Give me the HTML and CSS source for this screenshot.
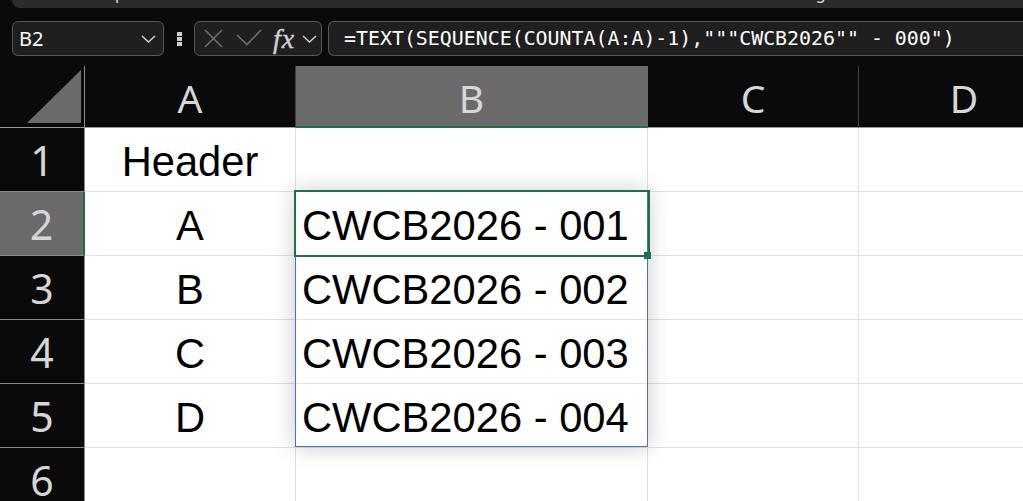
FILE: index.html
```html
<!DOCTYPE html>
<html lang="en">
<head>
  <meta charset="UTF-8">
  <meta name="viewport" content="width=device-width, initial-scale=1.0">
  <title>Sheet1</title>
  <link rel="stylesheet" href="styles.css">
</head>
<body>
  <div class="topbar">
    <span class="ghost ghost-p">p</span>
    <span class="ghost ghost-g">g</span>
  </div>

  <div class="formula-row">
    <div class="namebox">
      <span>B2</span>
      <svg class="chev" width="15" height="8" viewBox="0 0 15 8"><path d="M1 1 L7.5 7 L14 1"/></svg>
    </div>
    <div class="grip"><i></i><i></i><i></i></div>
    <div class="fx-tools">
      <svg class="ic-x" width="19" height="19" viewBox="0 0 19 19"><path d="M1 1 L18 18 M18 1 L1 18"/></svg>
      <svg class="ic-ok" width="26" height="17" viewBox="0 0 26 17"><path d="M1 6 L11 15.5 L25 1"/></svg>
      <span class="fx">fx</span>
      <svg class="chev" width="15" height="8" viewBox="0 0 15 8"><path d="M1 1 L7.5 7 L14 1"/></svg>
    </div>
    <div class="formula">=TEXT(SEQUENCE(COUNTA(A:A)-1),"""CWCB2026"" - 000")</div>
  </div>

  <div class="sheet">
    <div class="corner">
      <svg width="84" height="61" viewBox="0 0 84 61"><polygon points="27,57 81,57 81,4"/></svg>
    </div>
    <div class="ch">A</div>
    <div class="ch sel">B</div>
    <div class="ch">C</div>
    <div class="ch">D</div>

    <div class="rh">1</div>
    <div class="cell center">Header</div>
    <div class="cell"></div>
    <div class="cell"></div>
    <div class="cell"></div>

    <div class="rh sel">2</div>
    <div class="cell center">A</div>
    <div class="cell">CWCB2026 - 001</div>
    <div class="cell"></div>
    <div class="cell"></div>

    <div class="rh">3</div>
    <div class="cell center">B</div>
    <div class="cell">CWCB2026 - 002</div>
    <div class="cell"></div>
    <div class="cell"></div>

    <div class="rh">4</div>
    <div class="cell center">C</div>
    <div class="cell">CWCB2026 - 003</div>
    <div class="cell"></div>
    <div class="cell"></div>

    <div class="rh">5</div>
    <div class="cell center">D</div>
    <div class="cell">CWCB2026 - 004</div>
    <div class="cell"></div>
    <div class="cell"></div>

    <div class="rh">6</div>
    <div class="cell"></div>
    <div class="cell"></div>
    <div class="cell"></div>
    <div class="cell"></div>

    <!-- spill range B2:B5 and the active cell -->
    <div class="spill"></div>
    <div class="active"><span class="handle"></span></div>
  </div>
</body>
</html>
```

FILE: styles.css
```css
html, body {
  margin: 0;
  overflow: hidden;
}

body {
  background-color: #0a0a0a;
  font-family: "Noto Sans", sans-serif;
  width: 1023px;
  height: 501px;
}

.topbar {
  display: flex;
  height: 8px;
  margin-left: 12px;
  background-color: #2b2b2b;
  border-bottom-left-radius: 8px;
  overflow: hidden;
}

.ghost {
  font-size: 16px;
  line-height: 16px;
  margin-top: -15px;
  color: #dddddd;
}

.ghost-p {
  margin-left: 103px;
}

.ghost-g {
  margin-left: 691px;
}

.formula-row {
  display: flex;
  align-items: center;
  padding: 13px 0 0 12px;
  margin-bottom: 10px;
  overflow: hidden;
}

.formula-row > * {
  flex: none;
}

.namebox,
.fx-tools,
.formula {
  box-sizing: border-box;
  height: 35px;
  background-color: #1f1f1f;
  border: 1px solid #575757;
  border-radius: 6px;
  display: flex;
  align-items: center;
}

.namebox {
  width: 152px;
  justify-content: space-between;
  padding: 0 7px 0 6px;
  color: #ffffff;
  font-size: 20px;
}

.chev {
  fill: none;
  stroke: #cfcfcf;
  stroke-width: 1.5;
}

.grip {
  width: 30px;
  display: flex;
  flex-direction: column;
  align-items: center;
  gap: 1px;
}

.grip i {
  display: block;
  width: 5px;
  height: 4px;
  background-color: #d0d0d0;
}

.fx-tools {
  width: 128px;
  padding-left: 9px;
}

.ic-x,
.ic-ok {
  fill: none;
  stroke: #6e6e6e;
  stroke-width: 1.6;
}

.ic-ok {
  margin-left: 13px;
  margin-top: -2px;
}

.fx {
  margin-left: 11px;
  font-family: "Liberation Serif", serif;
  font-style: italic;
  font-size: 28px;
  letter-spacing: 1px;
  color: #d0d0d0;
  line-height: 27px;
  -webkit-text-stroke: 0.4px #d0d0d0;
}

.fx-tools .chev {
  margin-left: 7px;
}

.formula {
  width: 760px;
  margin-left: 6px;
  padding-left: 15px;
  border-right: none;
  border-radius: 6px 0 0 6px;
  color: #ffffff;
  font-family: "DejaVu Sans Mono", monospace;
  font-size: 19.9px;
  white-space: pre;
}

/* grid */
.sheet {
  position: relative;
  display: grid;
  grid-template-columns: 85px 211px 352px 211px 211px;
  grid-template-rows: 62px repeat(6, 64px);
  width: 1070px;
}

.sheet > div {
  box-sizing: border-box;
}

.corner {
  background-color: #0a0a0a;
  border-right: 1px solid #8a8a8a;
  border-bottom: 1px solid #9a9a9a;
}

.corner svg {
  display: block;
  fill: #6b6b6b;
}

.ch {
  background-color: #0a0a0a;
  color: #d6d6d6;
  font-size: 39px;
  line-height: 56px;
  padding-top: 4px;
  text-align: center;
  border-right: 1px solid #3c3c3c;
  border-bottom: 1px solid #9a9a9a;
}

.ch.sel {
  background-color: #6a6a6a;
  border-right-color: #6a6a6a;
  border-bottom: 2px solid #1e7145;
}

.rh {
  background-color: #0a0a0a;
  color: #d6d6d6;
  font-size: 41px;
  line-height: 56px;
  padding-top: 4px;
  text-align: center;
  border-right: 1px solid #8a8a8a;
  border-bottom: 1px solid #8a8a8a;
}

.rh.sel {
  background-color: #6a6a6a;
  border-right: 2px solid #1e7145;
}

.cell {
  background-color: #ffffff;
  color: #000000;
  font-family: "Liberation Sans", Arial, sans-serif;
  font-size: 41.7px;
  line-height: 59px;
  padding: 4px 0 0 6px;
  white-space: nowrap;
  border-right: 1px solid #e1e1e1;
  border-bottom: 1px solid #e1e1e1;
}

.cell.center {
  text-align: center;
  padding-left: 0;
}

.spill {
  position: absolute;
  left: 295px;
  top: 125px;
  width: 353px;
  height: 256px;
  border: 1px solid #4472c4;
  box-shadow: 0 0 22px rgba(0, 0, 0, 0.22);
}

.active {
  position: absolute;
  left: 294px;
  top: 124px;
  width: 356px;
  height: 67px;
  border: 2px solid #1e7145;
}

.handle {
  position: absolute;
  left: 348px;
  top: 60px;
  width: 7px;
  height: 7px;
  background-color: #1e7145;
}
```
